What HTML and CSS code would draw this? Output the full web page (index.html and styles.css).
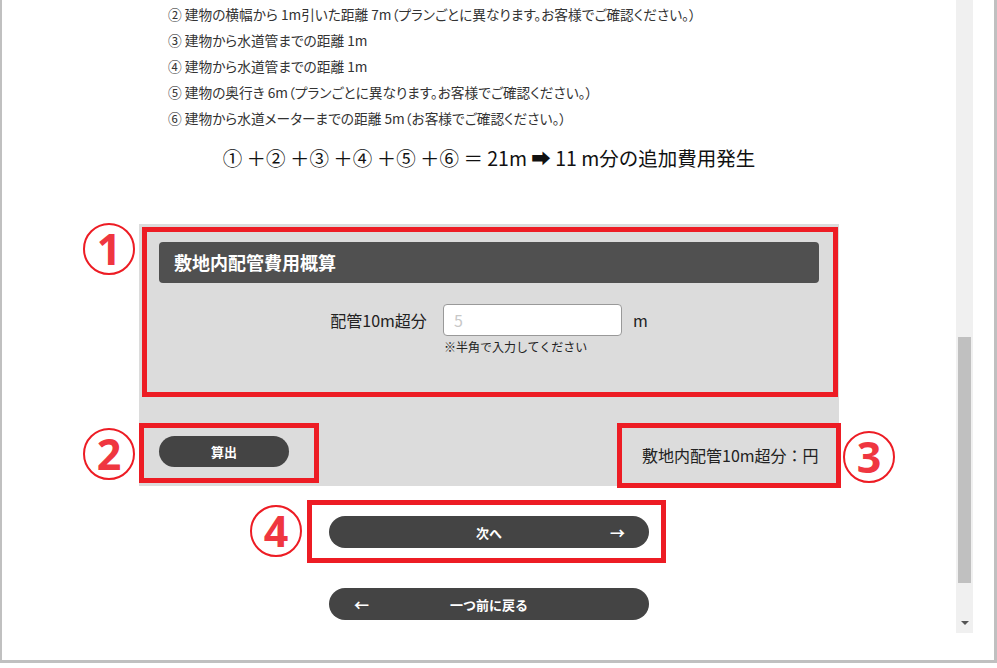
FILE: index.html
```html
<!DOCTYPE html>
<html lang="ja">
<head>
  <meta charset="UTF-8" />
  <meta name="viewport" content="width=device-width, initial-scale=1.0" />
  <title>敷地内配管費用概算</title>
  <link rel="stylesheet" href="styles.css">
</head>
<body>
  <div class="frame">
    <div class="page">
      <div class="main">
        <ul class="steps">
          <li>② 建物の横幅から 1m引いた距離 7m（プランごとに異なります。お客様でご確認ください。）</li>
          <li>③ 建物から水道管までの距離 1m</li>
          <li>④ 建物から水道管までの距離 1m</li>
          <li>⑤ 建物の奥行き 6m（プランごとに異なります。お客様でご確認ください。）</li>
          <li>⑥ 建物から水道メーターまでの距離 5m（お客様でご確認ください。）</li>
        </ul>
        <p class="formula">① ＋② ＋③ ＋④ ＋⑤ ＋⑥ ＝ 21m ➡ 11 m分の追加費用発生</p>

        <div class="panel">
          <div class="estimate mark">
            <h2 class="panel-title">敷地内配管費用概算</h2>
            <div class="field">
              <label class="field-label" for="pipe">配管10m超分</label>
              <div class="input-wrap">
                <input type="text" id="pipe" class="field-input" placeholder="5">
                <span class="field-note">※半角で入力してください</span>
              </div>
              <span class="field-unit">m</span>
            </div>
          </div>
          <div class="result-row">
            <div class="calc mark">
              <button class="btn btn-small">算出</button>
            </div>
            <div class="result mark">敷地内配管10m超分：円</div>
          </div>
        </div>

        <div class="next mark">
          <button class="btn btn-wide"><span>次へ</span><span class="arrow-right">→</span></button>
        </div>
        <button class="btn btn-wide btn-back"><span class="arrow-left">←</span><span>一つ前に戻る</span></button>
      </div>

      <div class="num num-1">1</div>
      <div class="num num-2">2</div>
      <div class="num num-3">3</div>
      <div class="num num-4">4</div>
    </div>

    <div class="scrollbar">
      <div class="thumb"></div>
      <div class="arrow-down"></div>
    </div>
  </div>
</body>
</html>
```

FILE: styles.css
```css
* {
  box-sizing: border-box;
}
body {
  margin: 0;
  background: #fff;
  font-family: "Noto Sans CJK JP", "Noto Sans", sans-serif;
  color: #333;
}
.frame {
  display: flex;
  width: 997px;
  height: 663px;
  border-left: 2px solid #c0c0c0;
  border-right: 3px solid #c0c0c0;
  border-bottom: 3px solid #c0c0c0;
}
.page {
  position: relative;
  width: 954px;
  overflow: hidden;
}
.main {
  margin-left: 137px;
  width: 700px;
}
.steps {
  list-style: none;
  margin: 0;
  padding: 1px 0 0 29px;
  font-size: 13.7px;
  line-height: 26px;
  color: #333;
  font-feature-settings: "palt";
}
.formula {
  margin: 14px 0 0;
  text-align: center;
  font-size: 19.5px;
  line-height: 26px;
  color: #111;
}

/* gray calculator panel */
.panel {
  margin-top: 53px;
  background: #dcdcdc;
  padding-top: 3px;
  height: 262px;
}
.mark {
  border: 5px solid #ed1c24;
}
.estimate {
  margin: 0 1px 0 3px;
  height: 170px;
  padding: 10px 14px 0 12px;
}
.panel-title {
  margin: 0;
  height: 41px;
  background: #505050;
  border-radius: 4px;
  color: #fff;
  font-size: 18px;
  font-weight: bold;
  line-height: 41px;
  padding-left: 15px;
}
.field {
  display: flex;
  justify-content: center;
  align-items: flex-start;
  margin-top: 21px;
  font-size: 16px;
  color: #222;
}
.field-label {
  line-height: 32px;
  margin-right: 16px;
}
.input-wrap {
  display: flex;
  flex-direction: column;
}
.field-input {
  width: 179px;
  height: 32px;
  border: 1px solid #999;
  border-radius: 4px;
  padding: 0 10px;
  font-family: inherit;
  font-size: 16px;
  color: #333;
}
.field-input::placeholder {
  color: #c8c8c8;
}
.field-note {
  font-size: 12px;
  line-height: 18px;
  margin-top: 2px;
  padding-left: 1px;
  color: #222;
}
.field-unit {
  line-height: 32px;
  margin-left: 11px;
}
.result-row {
  display: flex;
  justify-content: space-between;
  align-items: flex-start;
  margin-top: 26px;
}
.calc {
  width: 180px;
  height: 60px;
  padding: 8px 0 0 15px;
}
.result {
  width: 224px;
  height: 65px;
  margin-right: -2px;
  padding-left: 20px;
  font-size: 16px;
  line-height: 55px;
  color: #222;
}

/* buttons */
.btn {
  display: flex;
  align-items: center;
  justify-content: center;
  position: relative;
  border: none;
  background: #444;
  color: #fff;
  font-family: inherit;
  font-size: 13px;
  font-weight: bold;
  border-radius: 16px;
  cursor: pointer;
}
.btn-small {
  width: 130px;
  height: 31px;
}
.btn-wide {
  width: 320px;
  height: 32px;
}
.next {
  width: 359px;
  height: 63px;
  margin: 14px 0 0 168px;
  padding: 11px 0 0 17px;
}
.btn-back {
  margin: 25px 0 0 190px;
}
.arrow-right {
  position: absolute;
  right: 24px;
  font-size: 15px;
}
.arrow-left {
  position: absolute;
  left: 25px;
  font-size: 15px;
}

/* annotation numbers */
.num {
  position: absolute;
  width: 52px;
  height: 52px;
  border: 2px solid #ed1c24;
  border-radius: 50%;
  color: #ef3640;
  font-family: "Noto Sans", sans-serif;
  font-size: 43px;
  font-weight: bold;
  line-height: 48px;
  text-align: center;
}
.num-1 { left: 81px; top: 223px; }
.num-2 { left: 81px; top: 428px; }
.num-3 { left: 841px; top: 431px; }
.num-4 { left: 248px; top: 505px; }

/* window scrollbar */
.scrollbar {
  display: flex;
  flex-direction: column;
  width: 17px;
  height: 633px;
  margin-right: 21px;
  background: #f0f0f0;
}
.thumb {
  width: 13px;
  height: 246px;
  margin: 337px 0 0 2px;
  background: #c0c0c0;
}
.arrow-down {
  width: 0;
  height: 0;
  margin: 38px 0 0 5px;
  border-left: 4px solid transparent;
  border-right: 4px solid transparent;
  border-top: 4px solid #555;
}
```
